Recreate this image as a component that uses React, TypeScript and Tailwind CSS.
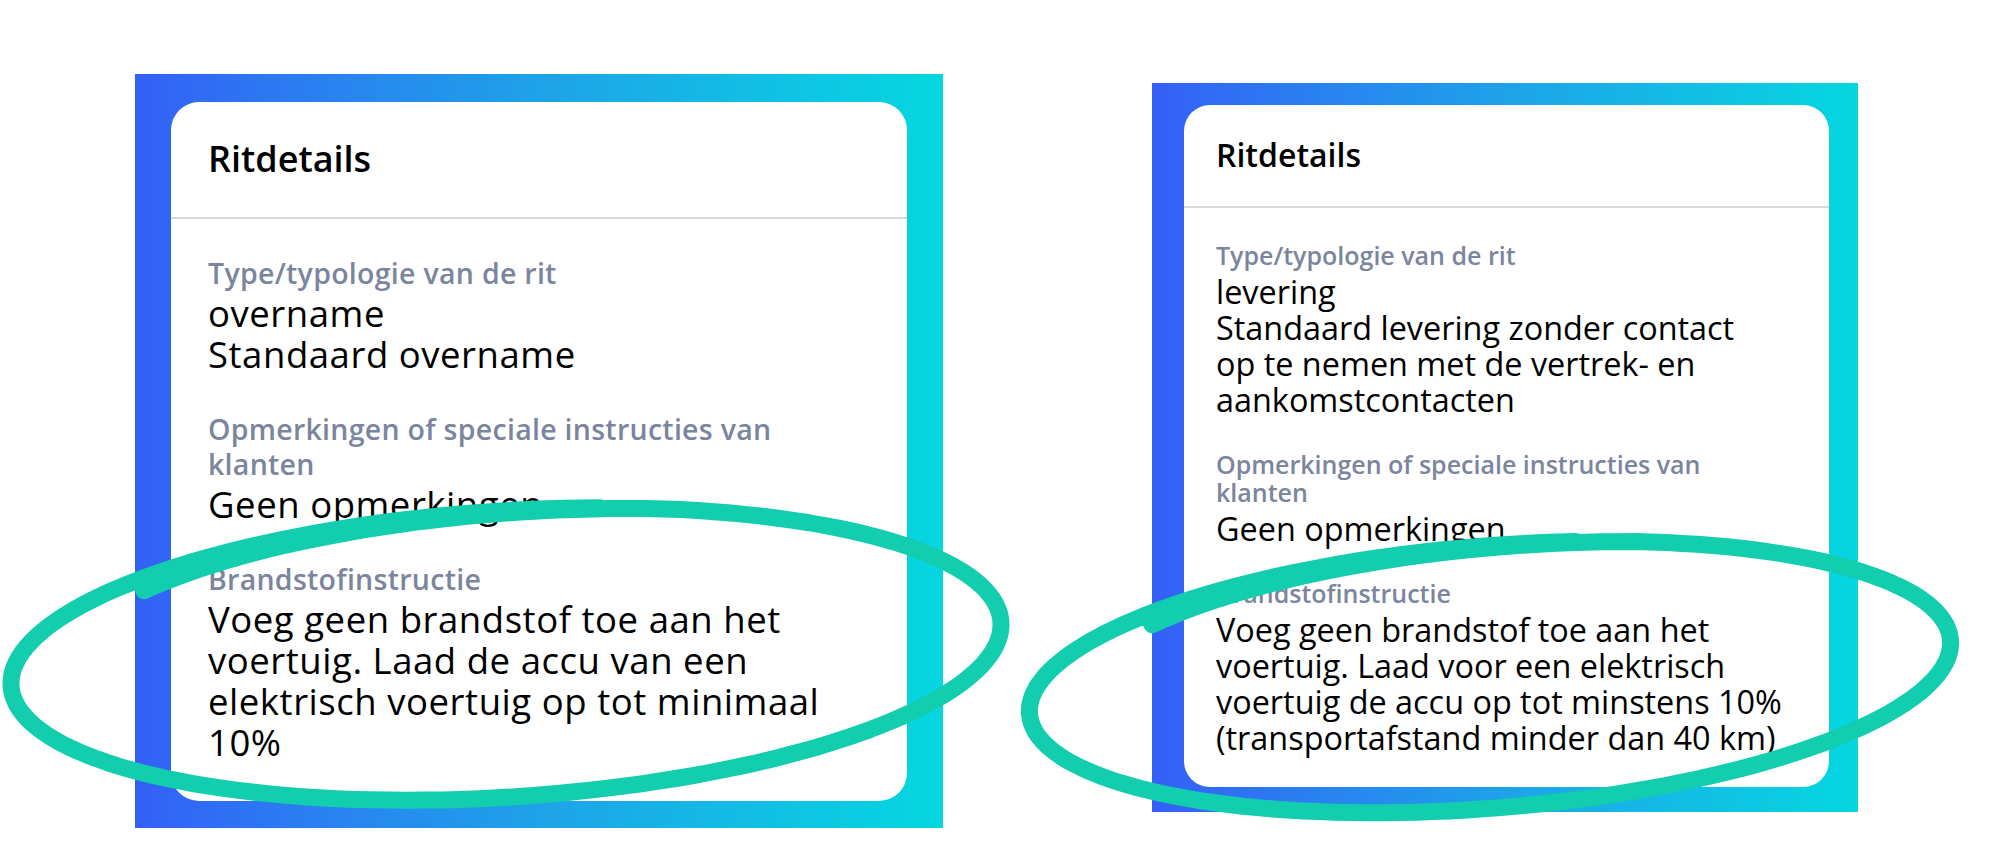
type Field = { label: string[]; value: string[] };

type Look = {
  frame: string;
  card: string;
  header: string;
  title: string;
  body: string;
  label: string;
  value: string;
};

const overname: Field[] = [
  { label: ["Type/typologie van de rit"], value: ["overname", "Standaard overname"] },
  {
    label: ["Opmerkingen of speciale instructies van", "klanten"],
    value: ["Geen opmerkingen"],
  },
  {
    label: ["Brandstofinstructie"],
    value: [
      "Voeg geen brandstof toe aan het",
      "voertuig. Laad de accu van een",
      "elektrisch voertuig op tot minimaal",
      "10%",
    ],
  },
];

const levering: Field[] = [
  {
    label: ["Type/typologie van de rit"],
    value: [
      "levering",
      "Standaard levering zonder contact",
      "op te nemen met de vertrek- en",
      "aankomstcontacten",
    ],
  },
  {
    label: ["Opmerkingen of speciale instructies van", "klanten"],
    value: ["Geen opmerkingen"],
  },
  {
    label: ["Brandstofinstructie"],
    value: [
      "Voeg geen brandstof toe aan het",
      "voertuig. Laad voor een elektrisch",
      "voertuig de accu op tot minstens 10%",
      "(transportafstand minder dan 40 km)",
    ],
  },
];

const large: Look = {
  frame: "pl-[36px] pr-[36px] pt-[28px] pb-[27px]",
  card: "w-[736px] rounded-[28px]",
  header: "px-[37px] pt-[32px] pb-[33px]",
  title: "text-[36px] leading-[50px]",
  body: "gap-[37px] px-[37px] pt-[37px] pb-[38px]",
  label: "text-[28.5px] leading-[35px] tracking-[0.01em] last-of-type:pb-[2px]",
  value: "text-[36.5px] leading-[41px] tracking-[0.015em]",
};

const small: Look = {
  frame: "ml-[209px] mt-[9px] pl-[32px] pr-[29px] pt-[22px] pb-[25px]",
  card: "w-[645px] rounded-[26px]",
  header: "px-[32px] pt-[28px] pb-[29px]",
  title: "text-[32px] leading-[44px]",
  body: "gap-[33px] px-[32px] pt-[33px] pb-[32px]",
  label: "text-[25px] leading-[28px] last-of-type:pb-[4px]",
  value: "text-[32.4px] leading-[36px]",
};

function RideCard({ fields, look }: { fields: Field[]; look: Look }) {
  return (
    <div className={`shrink-0 bg-linear-to-r from-[#345ff7] via-[#1ea2e8] to-[#05d7e0] ${look.frame}`}>
      <div className={`bg-white ${look.card}`}>
        <div className={`border-b-2 border-[#d9d9d9] ${look.header}`}>
          <h2 className={`font-semibold text-black ${look.title}`}>Ritdetails</h2>
        </div>
        <div className={`flex flex-col ${look.body}`}>
          {fields.map((f) => (
            <div key={f.label[0]}>
              <div>
                {f.label.map((line) => (
                  <p key={line} className={`whitespace-nowrap font-semibold text-[#7b859e] ${look.label}`}>
                    {line}
                  </p>
                ))}
              </div>
              {f.value.map((line) => (
                <p key={line} className={`whitespace-nowrap text-black ${look.value}`}>
                  {line}
                </p>
              ))}
            </div>
          ))}
        </div>
      </div>
    </div>
  );
}

// hand-drawn marker loop: one lap plus an overlap, the first stretch sits a bit inside
function loop(cx: number, cy: number, rx: number, ry: number, rot: number, from: number, sweep: number, inset: number) {
  const r = (rot * Math.PI) / 180;
  const pts: string[] = [];
  const steps = 200;
  for (let i = 0; i <= steps; i++) {
    const k = i / steps;
    const t = ((from + sweep * k) * Math.PI) / 180;
    const s = 1 - inset * Math.max(0, 1 - k * 6);
    const x = rx * s * Math.cos(t);
    const y = ry * s * Math.sin(t);
    const px = cx + x * Math.cos(r) - y * Math.sin(r);
    const py = cy + x * Math.sin(r) + y * Math.cos(r);
    pts.push(`${px.toFixed(1)} ${py.toFixed(1)}`);
  }
  return "M" + pts.join(" L");
}

export default function App() {
  return (
    <div className="relative h-[857px] w-[2000px] overflow-hidden bg-white font-['Open_Sans',sans-serif]">
      <div className="flex items-start pl-[135px] pt-[74px]">
        <RideCard fields={overname} look={large} />
        <RideCard fields={levering} look={small} />
      </div>

      <svg className="pointer-events-none absolute inset-0" width="2000" height="857" viewBox="0 0 2000 857">
        <g fill="none" stroke="#12cdae" strokeWidth="17" strokeLinecap="round" strokeLinejoin="round">
          <path d={loop(506, 654, 496, 143, -3.7, -140, 422, 0.06)} />
          <path d={loop(1490, 677, 462, 131, -4.6, -140, 422, 0.06)} />
        </g>
      </svg>
    </div>
  );
}
